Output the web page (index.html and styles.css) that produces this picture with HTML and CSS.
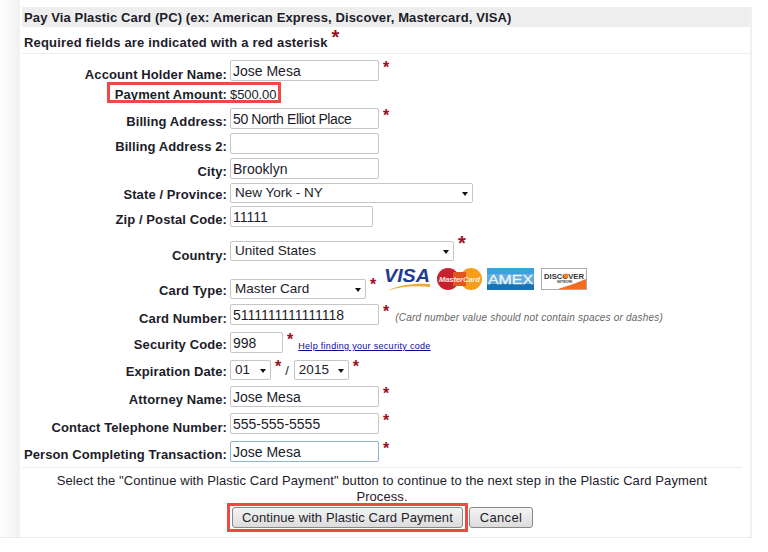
FILE: index.html
```html
<!DOCTYPE html>
<html lang="en">
<head>
    <meta charset="UTF-8">
    <title>Pay Via Plastic Card</title>
    <link rel="stylesheet" href="styles.css">
</head>
<body>
    <div class="page">
        <div class="panel">
            <h2 class="title">Pay Via Plastic Card (PC) (ex: American Express, Discover, Mastercard, VISA)</h2>
            <div class="required">Required fields are indicated with a red asterisk <span class="star star-big">*</span></div>

            <form class="form">
                <div class="row row-name">
                    <label class="label">Account Holder Name:</label>
                    <input class="field w-149" type="text" value="Jose Mesa">
                    <span class="star">*</span>
                </div>
                <div class="row row-amount">
                    <label class="label">Payment Amount:</label>
                    <span class="amount">$500.00</span>
                    <div class="mark mark-amount"></div>
                </div>
                <div class="row row-billing">
                    <label class="label">Billing Address:</label>
                    <input class="field field-tight w-149" type="text" value="50 North Elliot Place">
                    <span class="star">*</span>
                </div>
                <div class="row">
                    <label class="label">Billing Address 2:</label>
                    <input class="field w-149" type="text" value="">
                </div>
                <div class="row">
                    <label class="label">City:</label>
                    <input class="field w-149" type="text" value="Brooklyn">
                </div>
                <div class="row row-state">
                    <label class="label">State / Province:</label>
                    <div class="select w-243">
                        <select><option>New York - NY</option></select>
                    </div>
                </div>
                <div class="row row-zip">
                    <label class="label">Zip / Postal Code:</label>
                    <input class="field w-143" type="text" value="11111">
                </div>
                <div class="row row-country">
                    <label class="label">Country:</label>
                    <div class="select w-224">
                        <select><option>United States</option></select>
                    </div>
                    <span class="star star-big">*</span>
                </div>
                <div class="row row-card">
                    <label class="label">Card Type:</label>
                    <div class="select w-136">
                        <select><option>Master Card</option></select>
                    </div>
                    <span class="star">*</span>
                    <div class="logos">
                        <svg class="logo-visa" width="46" height="24" viewBox="0 0 46 24">
                            <text x="0" y="15" font-family="Liberation Sans" font-size="18" font-weight="bold" font-style="italic" fill="#1f3c94" textLength="46" lengthAdjust="spacingAndGlyphs">VISA</text>
                            <path d="M3 24 C14 18 30 16 46 17 L46 20 C30 18 14 20 3 24 Z" fill="#eeab3c"/>
                        </svg>
                        <svg class="logo-mc" width="45" height="22" viewBox="0 0 45 22">
                            <circle cx="11" cy="11" r="11" fill="#c8202c"/>
                            <circle cx="34" cy="11" r="11" fill="#f79d1e"/>
                            <rect x="16" y="4" width="13" height="14" fill="#e0561f"/>
                            <text x="22.5" y="13.5" text-anchor="middle" font-family="Liberation Sans" font-size="7.5" font-weight="bold" font-style="italic" fill="#f5f0ea" textLength="41" lengthAdjust="spacingAndGlyphs">MasterCard</text>
                        </svg>
                        <svg class="logo-amex" width="47" height="22" viewBox="0 0 47 22">
                            <rect width="47" height="22" fill="#1f86c8"/>
                            <rect width="47" height="6" fill="#3aa2dc"/>
                            <rect y="16" width="47" height="6" fill="#1873b5"/>
                            <rect y="6" width="47" height="10" fill="#e4f1f8" opacity="0.35"/>
                            <text x="1" y="15.5" font-family="Liberation Sans" font-size="13" fill="#eaf5fb" stroke="#eaf5fb" stroke-width="0.3" textLength="45" lengthAdjust="spacingAndGlyphs">AMEX</text>
                        </svg>
                        <svg class="logo-discover" width="46" height="22" viewBox="0 0 46 22">
                            <rect x="0.5" y="0.5" width="45" height="21" fill="#fff" stroke="#aaa"/>
                            <path d="M17 21 L45 21 L45 11 C36 15 26 18 17 21 Z" fill="#f26b21"/>
                            <text x="23" y="10.5" text-anchor="middle" font-family="Liberation Sans" font-size="7" font-weight="bold" fill="#333" textLength="40" lengthAdjust="spacingAndGlyphs">DISCOVER</text>
                            <circle cx="25" cy="8" r="2.4" fill="#f0801f"/>
                            <text x="16" y="14.5" font-family="Liberation Sans" font-size="3" font-weight="bold" fill="#444">NETWORK</text>
                        </svg>
                    </div>
                </div>
                <div class="row row-number">
                    <label class="label">Card Number:</label>
                    <input class="field w-149" type="text" value="5111111111111118">
                    <span class="star">*</span>
                    <span class="hint">(Card number value should not contain spaces or dashes)</span>
                </div>
                <div class="row row-security">
                    <label class="label">Security Code:</label>
                    <input class="field w-53" type="text" value="998">
                    <span class="star">*</span>
                    <a class="help" href="#">Help finding your security code</a>
                </div>
                <div class="row row-expires">
                    <label class="label">Expiration Date:</label>
                    <div class="select w-41">
                        <select><option>01</option></select>
                    </div>
                    <span class="star">*</span>
                    <span class="slash">/</span>
                    <div class="select w-55">
                        <select><option>2015</option></select>
                    </div>
                    <span class="star">*</span>
                </div>
                <div class="row row-attorney">
                    <label class="label">Attorney Name:</label>
                    <input class="field w-149" type="text" value="Jose Mesa">
                    <span class="star">*</span>
                </div>
                <div class="row row-phone">
                    <label class="label">Contact Telephone Number:</label>
                    <input class="field w-149" type="text" value="555-555-5555">
                    <span class="star">*</span>
                </div>
                <div class="row row-person">
                    <label class="label">Person Completing Transaction:</label>
                    <input class="field field-focus w-149" type="text" value="Jose Mesa">
                    <span class="star">*</span>
                </div>
            </form>

            <div class="footer">
                <p class="note">Select the "Continue with Plastic Card Payment" button to continue to the next step in the Plastic Card Payment Process.</p>
                <div class="buttons">
                    <div class="mark-button">
                        <button class="btn btn-main" type="button">Continue with Plastic Card Payment</button>
                    </div>
                    <button class="btn btn-cancel" type="button">Cancel</button>
                </div>
            </div>
        </div>
    </div>
</body>
</html>
```

FILE: styles.css
```css
* {
    box-sizing: border-box;
}
body {
    margin: 0;
    background: #fff;
    font-family: "Liberation Sans", Arial, sans-serif;
    font-size: 13px;
    color: #1c1c2a;
}
.page {
    height: 538px;
    padding: 7px 0 0 20px;
    width: 752px;
    border-bottom: 1px solid #ececec;
    background: linear-gradient(to right, #fff 0, #f1f1f1 20px, #fff 20px);
}
.panel {
    height: 530px;
    border-right: 2px solid #f0f0f0;
}
.title {
    margin: 0 0 0 2px;
    height: 20px;
    padding: 3px 0 0 2px;
    background: #eeeeee;
    font-size: 13px;
    font-weight: bold;
    line-height: 15px;
    letter-spacing: 0.12px;
}
.required {
    height: 27px;
    margin-left: 2px;
    padding: 3px 0 0 2px;
    border-bottom: 1px solid #ececec;
    font-size: 13px;
    font-weight: bold;
    line-height: 15px;
    letter-spacing: 0.18px;
}
.form {
    padding-top: 6px;
}
.row {
    position: relative;
    display: flex;
    align-items: flex-start;
    height: 21px;
    margin-top: 4px;
}
.row-name {
    margin-top: 0;
}
.row-amount {
    margin-top: 6px;
    height: 16px;
}
.row-billing {
    margin-top: 5px;
}
.row-zip {
    margin-top: 2px;
}
.row-country {
    margin-top: 14px;
    height: 20px;
}
.row-card {
    margin-top: 18px;
    height: 20px;
}
.row-number {
    margin-top: 5px;
}
.row-security {
    margin-top: 7px;
}
.row-expires {
    margin-top: 7px;
    height: 20px;
}
.row-attorney,
.row-phone {
    margin-top: 6px;
}
.row-person {
    margin-top: 7px;
}
.label {
    width: 210px;
    flex: none;
    padding: 6px 3px 0 0;
    text-align: right;
    font-size: 13px;
    font-weight: bold;
    line-height: 15px;
    letter-spacing: 0.1px;
    white-space: nowrap;
}
.row-amount .label {
    padding-top: 0;
}
.row-name .label,
.row-number .label,
.row-country .label,
.row-phone .label {
    padding-top: 7px;
}
.row-state .label,
.row-card .label,
.row-expires .label {
    padding-top: 4px;
}
.row-security .label {
    padding-top: 5px;
}
.amount {
    line-height: 15px;
    font-size: 13px;
    letter-spacing: -0.1px;
}
.field {
    height: 21px;
    padding: 0 2px;
    border: 1px solid #c6c6c6;
    border-radius: 2px;
    background: #fff;
    font-family: inherit;
    font-size: 14px;
    color: #1c1c2a;
}
.field-tight {
    letter-spacing: -0.4px;
}
.field-focus {
    border-color: #8db4d6;
}
.w-149 {
    width: 149px;
}
.w-143 {
    width: 143px;
}
.w-53 {
    width: 53px;
}
.w-243 {
    width: 243px;
}
.w-224 {
    width: 224px;
}
.w-136 {
    width: 136px;
}
.w-41 {
    width: 41px;
}
.w-55 {
    width: 55px;
}
.select {
    position: relative;
    flex: none;
    height: 20px;
}
.select::after {
    content: "";
    position: absolute;
    right: 5px;
    top: 9px;
    border-top: 4px solid #111;
    border-left: 3.5px solid transparent;
    border-right: 3.5px solid transparent;
}
.select select {
    appearance: none;
    width: 100%;
    height: 100%;
    padding: 0 0 2px 4px;
    border: 1px solid #c6c6c6;
    border-radius: 2px;
    background: #fff;
    font-family: inherit;
    font-size: 13.5px;
    color: #1c1c2a;
}
.star {
    flex: none;
    margin: -2px 0 0 4px;
    color: #9a0f1f;
    font-size: 16px;
    font-weight: bold;
    line-height: 20px;
}
.star-big {
    font-size: 20px;
    margin-left: 4px;
}
.required .star-big {
    margin: 0;
    line-height: 14px;
    vertical-align: 3px;
}
.row-country .star {
    margin-top: -8px;
}
.row-card .star {
    margin-top: -4px;
}
.row-expires .star {
    margin-top: -3px;
}
.logos {
    display: flex;
    align-items: flex-start;
    gap: 6px;
    margin: -11px 0 0 8px;
}
.logos svg {
    flex: none;
    display: block;
}
.logos .logo-visa {
    margin-top: -1px;
}
.logos .logo-mc,
.logos .logo-discover {
    margin-left: 1px;
}
.logos .logo-amex {
    margin-left: -1px;
}
.hint {
    margin: 7px 0 0 6px;
    color: #666;
    font-size: 10px;
    font-style: italic;
    letter-spacing: 0.2px;
    line-height: 14px;
}
.help {
    margin: 8px 0 0 5px;
    color: #0a0a9a;
    font-size: 9px;
    line-height: 12px;
    letter-spacing: 0.3px;
}
.slash {
    margin: 1px 5px 0 4px;
    line-height: 20px;
}
.mark {
    position: absolute;
    border: 3px solid #ee4a44;
}
.mark-amount {
    left: 87px;
    top: -5px;
    width: 174px;
    height: 21px;
}
.footer {
    margin: 5px 8px 0 2px;
    border-top: 1px solid #ececec;
    padding-top: 5px;
    text-align: center;
}
.note {
    margin: 0;
    padding: 0 20px;
    font-size: 13px;
    line-height: 16px;
    letter-spacing: 0.08px;
}
.buttons {
    display: flex;
    justify-content: center;
    align-items: center;
    gap: 1px;
    margin-top: -2px;
    padding-right: 4px;
}
.mark-button {
    padding: 1px 2px;
    border: 3px solid #ee4a44;
}
.btn {
    height: 21px;
    border: 1px solid #888;
    border-radius: 3px;
    background: linear-gradient(#f4f4f4, #dcdcdc);
    font-family: inherit;
    font-size: 13px;
    letter-spacing: 0.1px;
    color: #1c1c2a;
    padding: 0;
}
.btn-main {
    display: block;
    width: 231px;
}
.btn-cancel {
    width: 64px;
    letter-spacing: 0.3px;
}
```
